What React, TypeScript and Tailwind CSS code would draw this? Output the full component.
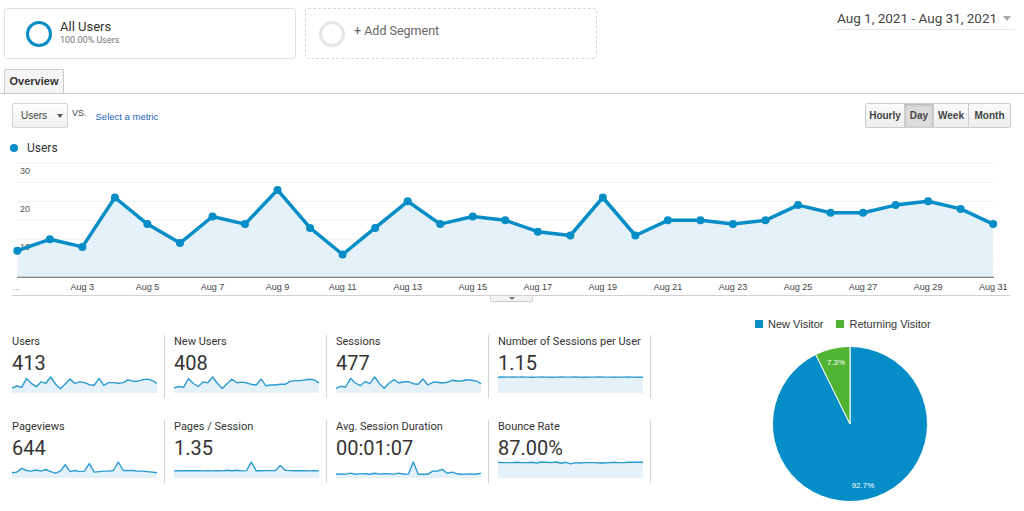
import type { ReactNode } from "react";

const blue = "#058dc7";

const users = [7, 10, 8, 21, 14, 9, 16, 14, 23, 13, 6, 13, 20, 14, 16, 15, 12, 11, 21, 11, 15, 15, 14, 15, 19, 17, 17, 19, 20, 18, 14];
const newUsers = [7, 9, 8, 20, 13, 9, 15, 14, 22, 13, 6, 13, 19, 14, 15, 14, 12, 11, 19, 10, 11, 11, 12, 12, 16, 17, 17, 18, 19, 18, 14];
const sessions = [7, 10, 9, 22, 15, 11, 17, 14, 24, 14, 7, 15, 20, 15, 17, 17, 14, 13, 21, 12, 16, 16, 15, 16, 19, 18, 18, 20, 19, 18, 14];
const sessionsPerUser = [1.13, 1.15, 1.14, 1.15, 1.14, 1.15, 1.14, 1.13, 1.14, 1.15, 1.14, 1.13, 1.14, 1.15, 1.14, 1.14, 1.15, 1.14, 1.13, 1.14, 1.14, 1.15, 1.14, 1.14, 1.13, 1.14, 1.14, 1.15, 1.14, 1.13, 1.13];
const pageviews = [10, 11, 18, 14, 13, 15, 13, 16, 12, 9, 13, 25, 12, 14, 12, 13, 27, 11, 12, 13, 13, 14, 30, 14, 14, 14, 13, 13, 12, 11, 10];
const pagesPerSession = [1.2, 1.22, 1.22, 1.23, 1.24, 1.22, 1.2, 1.24, 1.2, 1.25, 1.2, 1.3, 1.22, 1.3, 1.2, 1.25, 2.7, 1.22, 1.22, 1.25, 1.25, 1.27, 2.1, 1.3, 1.25, 1.22, 1.22, 1.22, 1.2, 1.22, 1.2];
const avgDuration = [30, 33, 32, 40, 31, 33, 35, 31, 38, 32, 35, 33, 32, 40, 31, 33, 130, 30, 30, 30, 55, 57, 70, 38, 48, 35, 30, 32, 33, 30, 40];
const bounceRate = [89, 88, 88, 88, 89, 88, 88, 89, 87, 90, 89, 88, 90, 86, 89, 84, 88, 87, 88, 88, 88, 87, 87, 88, 89, 88, 88, 89, 89, 89, 89];

const metrics = [
  { label: "Users", value: "413", data: users, floor: 0 },
  { label: "New Users", value: "408", data: newUsers, floor: 0 },
  { label: "Sessions", value: "477", data: sessions, floor: 0 },
  { label: "Number of Sessions per User", value: "1.15", data: sessionsPerUser, floor: 0 },
  { label: "Pageviews", value: "644", data: pageviews, floor: 0 },
  { label: "Pages / Session", value: "1.35", data: pagesPerSession, floor: 0 },
  { label: "Avg. Session Duration", value: "00:01:07", data: avgDuration, floor: 0 },
  { label: "Bounce Rate", value: "87.00%", data: bounceRate, floor: 40 }
];

function Sparkline({ data, floor }: { data: number[]; floor: number }) {
  const w = 145;
  const h = 18;
  const max = Math.max(...data);
  const line = data
    .map((v, i) => `${((i * w) / (data.length - 1)).toFixed(1)},${(h - ((v - floor) / (max - floor)) * 16).toFixed(1)}`)
    .join(" ");
  return (
    <svg width={w} height={h} className="block overflow-visible">
      <polygon points={`0,${h} ${line} ${w},${h}`} fill="#e5f1f9" />
      <polyline points={line} fill="none" stroke="#2a9bd3" strokeWidth={1.4} strokeLinejoin="round" />
    </svg>
  );
}

function Metric({ label, value, data, floor }: { label: string; value: string; data: number[]; floor: number }) {
  return (
    <div className="h-[63px] border-r border-[#d3d3d3] pl-[9px]">
      <div className="text-[11px] leading-[13px] text-[#333]">{label}</div>
      <div className="mt-[3px] text-[20px] leading-[24px] text-[#333]">{value}</div>
      <Sparkline data={data} floor={floor} />
    </div>
  );
}

function MainChart() {
  const x = (i: number) => 17.3 + i * 32.53;
  const y = (v: number) => 121.3 - v * 3.8;
  const line = users.map((v, i) => `${x(i).toFixed(1)},${y(v).toFixed(1)}`).join(" ");
  return (
    <svg width={1024} height={150} className="block font-['Liberation_Sans',Arial,sans-serif]">
      {[5, 10, 15, 20, 25, 30].map((g) => (
        <line key={g} x1={17} x2={994} y1={y(g)} y2={y(g)} stroke="#efefef" />
      ))}
      <polygon points={`${x(0)},${y(0)} ${line} ${x(30)},${y(0)}`} fill="#e5f1f9" />
      <line x1={17} x2={994} y1={y(0)} y2={y(0)} stroke="#666" />
      {[
        ["30", 17.5],
        ["20", 56],
        ["10", 94]
      ].map(([t, ty]) => (
        <text key={t} x={20} y={ty} fontSize={9} fill="#555">
          {t}
        </text>
      ))}
      <polyline points={line} fill="none" stroke={blue} strokeWidth={3.5} strokeLinejoin="round" />
      {users.map((v, i) => (
        <circle key={i} cx={x(i)} cy={y(v)} r={4} fill={blue} />
      ))}
      <text x={13} y={134} fontSize={9} fill="#999">
        ...
      </text>
      {users.map((_, i) =>
        i % 2 === 1 || i === 0 ? null : (
          <text key={i} x={x(i)} y={134} fontSize={9} fill="#444" textAnchor="middle">
            {`Aug ${i + 1}`}
          </text>
        )
      )}
      <line x1={12} x2={1010} y1={139.5} y2={139.5} stroke="#d0d0d0" />
      <rect x={490.5} y={139.5} width={42} height={6} fill="#f3f3f3" stroke="#d0d0d0" rx={1} />
      <polygon points="509,141 515,141 512,144" fill="#777" />
    </svg>
  );
}

function PeriodButton({ children, active, last }: { children: ReactNode; active?: boolean; last?: boolean }) {
  return (
    <div
      className={`flex h-full items-center justify-center text-[10px] font-bold text-[#444] ${last ? "" : "border-r border-[#ccc]"} ${
        active ? "bg-[#dcdcdc] shadow-[inset_0_1px_3px_rgba(0,0,0,0.2)]" : "bg-gradient-to-b from-[#fafafa] to-[#eeeeee]"
      }`}
    >
      {children}
    </div>
  );
}

function Pie() {
  return (
    <svg width={160} height={160} className="block font-['Liberation_Sans',Arial,sans-serif]">
      <path d="M80,79 L45.7,9.5 A77.5,77.5 0 1 0 80,1.5 Z" fill={blue} stroke="#fff" strokeWidth={1} />
      <path d="M80,79 L80,1.5 A77.5,77.5 0 0 0 45.7,9.5 Z" fill="#50b432" stroke="#fff" strokeWidth={1} />
      <text x={66} y={20} fontSize={8} fill="#fff" textAnchor="middle">
        7.3%
      </text>
      <text x={93} y={143} fontSize={8} fill="#fff" textAnchor="middle">
        92.7%
      </text>
    </svg>
  );
}

export default function App() {
  return (
    <main className="h-[511px] w-[1024px] overflow-hidden bg-white font-['Roboto',Arial,sans-serif] text-[#333]">
      <div className="flex items-start pl-1 pt-2">
        <div className="flex h-[51px] w-[292px] items-center rounded-[3px] border border-[#e0e0e0] pl-[21px]">
          <div className="h-[26px] w-[26px] rounded-full border-[3px] border-[#058dc7]" />
          <div className="ml-2 -mt-[3px]">
            <div className="text-[13px] leading-[16px] text-[#333]">All Users</div>
            <div className="text-[9px] leading-[11px] text-[#777]">100.00% Users</div>
          </div>
        </div>
        <div className="ml-[9px] flex h-[51px] w-[292px] items-center rounded-[3px] border border-dashed border-[#d8d8d8] pl-[13px]">
          <div className="h-[26px] w-[26px] rounded-full border-[3px] border-[#e6e6e6]" />
          <div className="ml-[9px] -mt-[4px] text-[12.5px] text-[#666]">+ Add Segment</div>
        </div>
        <div className="ml-auto mr-[9px] flex h-[22px] w-[180px] items-start border-b border-[#e8e8e8] pl-[2px]">
          <span className="whitespace-nowrap text-[13.5px] leading-[20px] text-[#444]">Aug 1, 2021 - Aug 31, 2021</span>
          <span className="ml-auto mr-[4px] mt-[8px] h-0 w-0 border-x-[4px] border-t-[5px] border-x-transparent border-t-[#aaa]" />
        </div>
      </div>

      <div className="mt-[10px] border-b border-[#ccc] pl-1">
        <div className="flex h-[24px] w-[60px] items-center justify-center rounded-t-[2px] border-x border-t border-[#ccc] bg-[#f5f5f5] font-['Liberation_Sans',Arial,sans-serif] text-[11px] font-bold text-[#333]">
          Overview
        </div>
      </div>

      <div className="mt-[9px] flex items-start justify-between pl-3 pr-[13px] font-['Liberation_Sans',Arial,sans-serif]">
        <div className="flex items-start">
          <div className="flex h-[25px] w-[56px] items-center rounded-[2px] border border-[#d5d5d5] bg-gradient-to-b from-[#fdfdfd] to-[#f0f0f0] pl-[8px] text-[10px] text-[#444]">
            Users
            <span className="ml-[10px] h-0 w-0 border-x-[3.5px] border-t-[4px] border-x-transparent border-t-[#555]" />
          </div>
          <span className="ml-[4px] mt-[4px] text-[9px] text-[#444]">VS.</span>
          <span className="ml-[9px] mt-[7px] text-[9.5px] text-[#2266bb]">Select a metric</span>
        </div>
        <div className="grid h-[25px] grid-cols-[39px_29px_35px_41px] overflow-hidden rounded-[2px] border border-[#ccc]">
          <PeriodButton>Hourly</PeriodButton>
          <PeriodButton active>Day</PeriodButton>
          <PeriodButton>Week</PeriodButton>
          <PeriodButton last>Month</PeriodButton>
        </div>
      </div>

      <div className="mt-[12px] flex items-center pl-[10px]">
        <span className="h-2 w-2 rounded-full bg-[#058dc7]" />
        <span className="ml-[9px] text-[12px] leading-[16px] text-[#333]">Users</span>
      </div>

      <MainChart />

      <div className="flex">
        <div className="w-[651px] pl-[3px] pt-[29px]">
          <div className="grid grid-cols-4 gap-y-[22px]">
            {metrics.map((m) => (
              <Metric key={m.label} {...m} />
            ))}
          </div>
        </div>
        <div className="ml-[104px] pt-[11px]">
          <div className="flex items-center font-['Liberation_Sans',Arial,sans-serif] text-[11px] leading-[14px] text-[#333]">
            <span className="h-2 w-2 bg-[#058dc7]" />
            <span className="ml-[5px]">New Visitor</span>
            <span className="ml-[13px] h-2 w-2 bg-[#50b432]" />
            <span className="ml-[5px]">Returning Visitor</span>
          </div>
          <div className="ml-[15px] mt-[14px]">
            <Pie />
          </div>
        </div>
      </div>
    </main>
  );
}
